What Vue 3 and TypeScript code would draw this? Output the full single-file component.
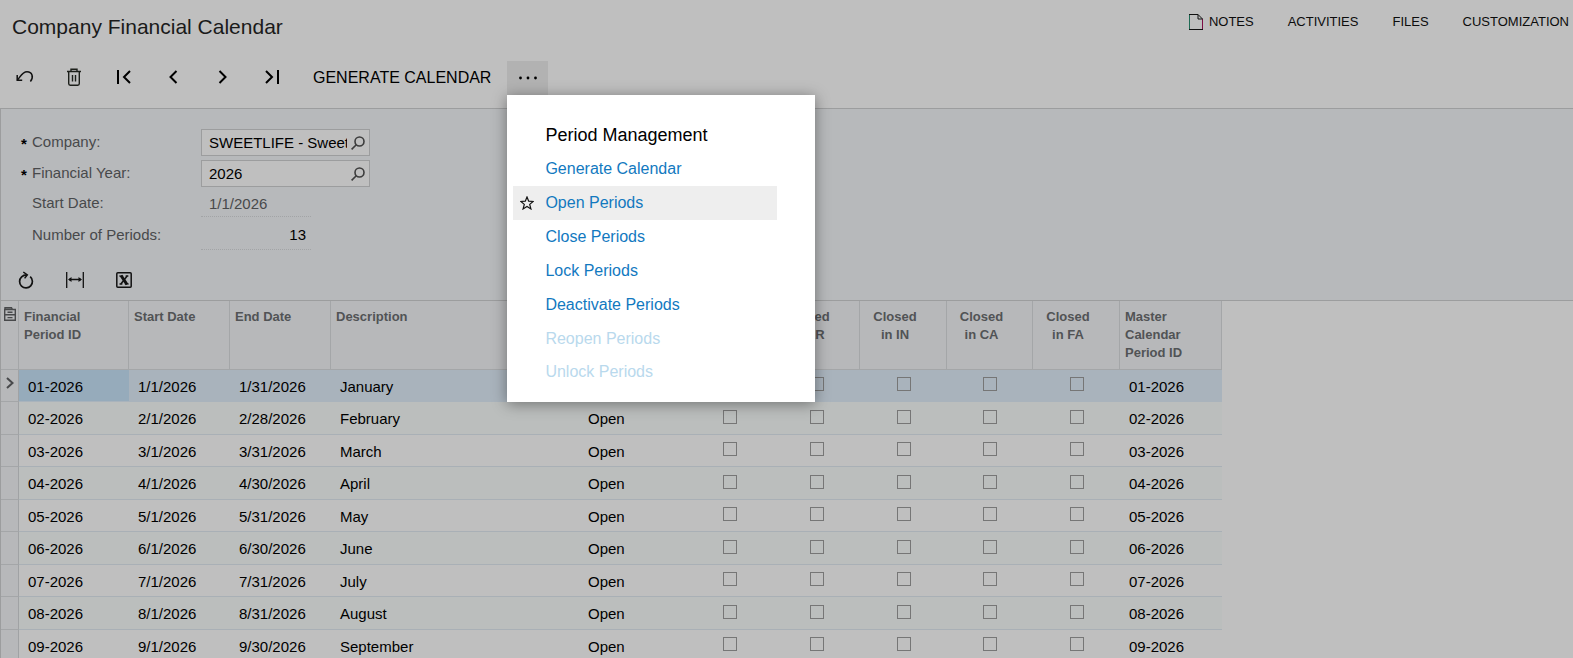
<script setup lang="ts">
import { ref } from 'vue'

interface Period {
  id: string
  start: string
  end: string
  name: string
}

interface Command {
  label: string
  disabled?: boolean
}

const navLinks: string[] = ['ACTIVITIES', 'FILES', 'CUSTOMIZATION']

const company = ref('SWEETLIFE - Sweet')
const year = ref('2026')
const activeCommand = ref('Open Periods')
const selected = ref('01-2026')

const commands: Command[] = [
  { label: 'Generate Calendar' },
  { label: 'Open Periods' },
  { label: 'Close Periods' },
  { label: 'Lock Periods' },
  { label: 'Deactivate Periods' },
  { label: 'Reopen Periods', disabled: true },
  { label: 'Unlock Periods', disabled: true },
]

const closedIn: string[] = ['AP', 'AR', 'IN', 'CA', 'FA']

const periods: Period[] = [
  { id: '01-2026', start: '1/1/2026', end: '1/31/2026', name: 'January' },
  { id: '02-2026', start: '2/1/2026', end: '2/28/2026', name: 'February' },
  { id: '03-2026', start: '3/1/2026', end: '3/31/2026', name: 'March' },
  { id: '04-2026', start: '4/1/2026', end: '4/30/2026', name: 'April' },
  { id: '05-2026', start: '5/1/2026', end: '5/31/2026', name: 'May' },
  { id: '06-2026', start: '6/1/2026', end: '6/30/2026', name: 'June' },
  { id: '07-2026', start: '7/1/2026', end: '7/31/2026', name: 'July' },
  { id: '08-2026', start: '8/1/2026', end: '8/31/2026', name: 'August' },
  { id: '09-2026', start: '9/1/2026', end: '9/30/2026', name: 'September' },
]
</script>

<template>
  <div class="page">
    <header class="top">
      <h1>Company Financial Calendar</h1>
      <nav class="links">
        <a href="#" class="notes">
          <svg width="14" height="16" viewBox="0 0 14 16" fill="none" stroke-width="1">
            <path d="M.5 15V.5" stroke="#1f6b55" />
            <path d="M13.500 5v10" stroke="#7d0f45" />
            <path d="M0 .5h9l4.500 4.500M0 15.500h14M9 .5V5h4.500" stroke="#111" />
          </svg>
          NOTES
        </a>
        <a v-for="link in navLinks" :key="link" href="#">{{ link }}</a>
      </nav>
    </header>

    <div class="toolbar">
      <div class="icons main-icons">
        <button type="button" aria-label="Cancel">
          <svg width="20" height="16" viewBox="0 0 20 16" fill="none" stroke="#111" stroke-width="1.500">
            <path d="M2.300 11.200C5.500 7.500 7.500 2.800 12 2.800c5.200 0 7 5.400 3.400 9.700" />
            <path d="M2.200 6v5.300h5" />
          </svg>
        </button>
        <button type="button" aria-label="Delete">
          <svg width="14" height="18" viewBox="0 0 14 18" fill="none" stroke="#1c1f1a" stroke-width="1.400">
            <path d="M0 3.500h14M4 3.500V1.200h6v2.300M1.700 3.500v12c0 1 .5 1.700 1.500 1.700h7.600c1 0 1.500-.7 1.500-1.700v-12M5.500 7v6.500M8.500 7v6.500" />
          </svg>
        </button>
        <button type="button" aria-label="First">
          <svg width="14" height="14" viewBox="0 0 14 14" fill="none" stroke="#000" stroke-width="2">
            <path d="M1 0v14M13 1L7 7l6 6" />
          </svg>
        </button>
        <button type="button" aria-label="Previous">
          <svg width="9" height="14" viewBox="0 0 9 14" fill="none" stroke="#000" stroke-width="2">
            <path d="M7.500 1l-6 6 6 6" />
          </svg>
        </button>
        <button type="button" aria-label="Next">
          <svg width="9" height="14" viewBox="0 0 9 14" fill="none" stroke="#000" stroke-width="2">
            <path d="M1.500 1l6 6-6 6" />
          </svg>
        </button>
        <button type="button" aria-label="Last">
          <svg width="14" height="14" viewBox="0 0 14 14" fill="none" stroke="#000" stroke-width="2">
            <path d="M13 0v14M1 1l6 6-6 6" />
          </svg>
        </button>
      </div>
      <button type="button" class="generate">GENERATE CALENDAR</button>
      <div class="more">
        <button type="button" class="more-button" aria-label="More commands" aria-expanded="true">
          <svg width="20" height="4" viewBox="0 0 20 4" fill="#000">
            <circle cx="2.500" cy="2" r="1.400" />
            <circle cx="10" cy="2" r="1.400" />
            <circle cx="17.500" cy="2" r="1.400" />
          </svg>
        </button>
        <section class="menu">
          <h2>Period Management</h2>
          <button
            v-for="command in commands"
            :key="command.label"
            type="button"
            class="command"
            :class="{ active: command.label === activeCommand }"
            :disabled="command.disabled"
            @mouseenter="activeCommand = command.label"
          >
            <span class="star">
              <svg v-if="command.label === activeCommand" width="14" height="14" viewBox="0 0 14 14" fill="none" stroke="#111" stroke-width="1.200">
                <path d="M7 1l1.700 4.200 4.500.3-3.500 2.900 1.200 4.500L7 10.400l-3.900 2.500 1.200-4.500L.8 5.500l4.500-.3z" />
              </svg>
            </span>
            {{ command.label }}
          </button>
        </section>
      </div>
    </div>

    <main class="panel">
      <form class="form" @submit.prevent>
        <label for="company" class="required">Company:</label>
        <div class="lookup">
          <input id="company" v-model="company" type="text" />
          <button type="button" aria-label="Find company">
            <svg width="14" height="14" viewBox="0 0 14 14" fill="none" stroke="#3c3c3c" stroke-width="1.600">
              <circle cx="8.500" cy="5.500" r="4.500" />
              <path d="M5.300 8.700L.6 13.400" />
            </svg>
          </button>
        </div>
        <label for="year" class="required">Financial Year:</label>
        <div class="lookup">
          <input id="year" v-model="year" type="text" />
          <button type="button" aria-label="Find year">
            <svg width="14" height="14" viewBox="0 0 14 14" fill="none" stroke="#3c3c3c" stroke-width="1.600">
              <circle cx="8.500" cy="5.500" r="4.500" />
              <path d="M5.300 8.700L.6 13.400" />
            </svg>
          </button>
        </div>
        <label for="start">Start Date:</label>
        <input id="start" class="readonly" type="text" value="1/1/2026" readonly />
        <label for="count">Number of Periods:</label>
        <input id="count" class="readonly count" type="text" value="13" readonly />
      </form>

      <div class="icons grid-icons">
        <button type="button" aria-label="Refresh">
          <svg width="16" height="18" viewBox="0 0 16 18" fill="none" stroke="#111" stroke-width="1.700">
            <path d="M12.200 5.700A6.400 6.400 0 1 1 3.600 5.900C4.900 4.600 6.500 3.900 9 3.900" />
            <path d="M5.300 1l4 2.900-2.700 3.500" stroke-width="1.500" />
          </svg>
        </button>
        <button type="button" aria-label="Fit columns">
          <svg width="18" height="16" viewBox="0 0 18 16" fill="none" stroke="#111" stroke-width="1.300">
            <path d="M.7 0v16M17.300 0v16M3 7.500h12" />
            <path d="M2 7.500l3.500-2.500v5zM16 7.500l-3.500-2.500v5z" fill="#111" stroke="none" />
          </svg>
        </button>
        <button type="button" aria-label="Export to Excel">
          <svg width="16" height="16" viewBox="0 0 16 16" fill="none" stroke="#111">
            <rect x=".8" y=".8" width="14.400" height="14.400" rx="1" stroke-width="1.500" />
            <path d="M5 3.500l6 9" stroke-width="3" />
            <path d="M11.500 3.500l-7 9" stroke-width="1.500" />
            <path d="M3.200 4h4M9.500 4h3M3.300 12h3.200M8.800 12h4" stroke-width="1" />
          </svg>
        </button>
      </div>

      <div class="grid">
        <table>
          <colgroup>
            <col class="c-mark" />
            <col class="c-id" />
            <col class="c-date" />
            <col class="c-date" />
            <col class="c-desc" />
            <col class="c-status" />
            <col v-for="code in closedIn" :key="code" class="c-closed" />
            <col class="c-master" />
          </colgroup>
          <thead>
            <tr>
              <th class="mark" aria-label="Row details">
                <svg width="12" height="14" viewBox="0 0 12 14" fill="none" stroke="#48494b" stroke-width="1.400">
                  <path d="M.7 2.500h10.600v10.800H.7zM.7 7.800h10.600M1 2.500V.7h6.500l1 1.800M3.500 5.200h5M3.500 10.600h5" />
                </svg>
              </th>
              <th>Financial<br />Period ID</th>
              <th>Start Date</th>
              <th>End Date</th>
              <th>Description</th>
              <th aria-label="Status"></th>
              <th v-for="code in closedIn" :key="code" class="closed">Closed<br />in {{ code }}</th>
              <th>Master<br />Calendar<br />Period ID</th>
            </tr>
          </thead>
          <tbody>
            <tr
              v-for="period in periods"
              :key="period.id"
              :class="{ selected: period.id === selected }"
              @click="selected = period.id"
            >
              <td class="mark">
                <svg v-if="period.id === selected" width="8" height="12" viewBox="0 0 8 12" fill="none" stroke="#48494b" stroke-width="2">
                  <path d="M1 1l5.500 5L1 11" />
                </svg>
              </td>
              <td class="id">{{ period.id }}</td>
              <td>{{ period.start }}</td>
              <td>{{ period.end }}</td>
              <td>{{ period.name }}</td>
              <td>Open</td>
              <td v-for="code in closedIn" :key="code" class="check">
                <input type="checkbox" :aria-label="`${period.name} closed in ${code}`" />
              </td>
              <td>{{ period.id }}</td>
            </tr>
          </tbody>
        </table>
      </div>
    </main>
  </div>
</template>

<style>
html,
body {
  margin: 0;
  overflow: hidden;
  background: #bfbfbf;
}
</style>

<style scoped>
* {
  box-sizing: border-box;
}

.page {
  min-height: 100vh;
  background: #bfbfbf;
  color: #000;
  font: 15px/18px "Liberation Sans", Arial, sans-serif;
}

button,
input {
  margin: 0;
  padding: 0;
  border: 0;
  outline: 0;
  border-radius: 0;
  background: none;
  color: inherit;
  font: inherit;
}

svg {
  display: block;
  flex: none;
}

.top {
  display: flex;
  justify-content: space-between;
  height: 61px;
  padding: 0 4px 0 12px;
}

h1 {
  margin: 0;
  padding-top: 14px;
  color: #1a1a1a;
  font-size: 21px;
  font-weight: 400;
  line-height: 26px;
}

.links {
  display: flex;
  gap: 34px;
  padding-top: 12px;
  font-size: 13px;
}

.links a {
  height: 20px;
  color: #0c0c0c;
  line-height: 20px;
  text-decoration: none;
}

.links .notes {
  display: flex;
  align-items: center;
  gap: 6px;
}

.toolbar {
  display: flex;
  height: 47px;
}

.icons {
  display: grid;
}

.icons button {
  display: grid;
  place-items: center;
}

.main-icons {
  grid-template-columns: repeat(6, 1fr);
  width: 297px;
  height: 32px;
}

.generate {
  height: 34px;
  padding: 0 16px;
  font-size: 16px;
}

.more {
  position: relative;
}

.more-button {
  display: grid;
  place-items: center;
  width: 41px;
  height: 34px;
  background: #b2b2b2;
}

.menu {
  position: absolute;
  z-index: 2;
  top: 34px;
  left: 0;
  width: 308px;
  padding: 23px 38px 14px 6px;
  background: #fff;
  box-shadow: 0 2px 14px rgba(0, 0, 0, 0.4);
}

h2 {
  margin: 0;
  padding-left: 32px;
  font-size: 18px;
  font-weight: 400;
  line-height: 34px;
}

.command {
  display: flex;
  align-items: center;
  width: 100%;
  height: 34px;
  color: #1279bf;
  font-size: 16px;
  text-align: left;
}

.command.active {
  background: #eee;
}

.command:disabled {
  height: 33px;
  color: #b9d9ed;
}

.star {
  width: 32px;
  padding-left: 7px;
}

.panel {
  border-top: 1px solid #9c9d9e;
  border-left: 1px solid #9c9d9e;
  background: #b7b9bb;
}

.form {
  display: grid;
  grid-template-columns: 200px 169px;
  grid-template-rows: 27px 27px 26px 29px;
  gap: 4px 0;
  padding-top: 20px;
}

.form label {
  align-self: center;
  padding: 0 0 2px 31px;
  color: #48494b;
}

.form .required {
  padding-left: 20px;
}

.required::before {
  content: "*";
  display: inline-block;
  width: 11px;
  color: #000;
  font-weight: 700;
  line-height: 14px;
  vertical-align: -2px;
}

.lookup {
  display: flex;
  border: 1px solid #9c9d9e;
  background: #bfbfbf;
}

.lookup input {
  flex: 1;
  min-width: 0;
  padding-left: 7px;
}

.lookup button {
  display: grid;
  place-items: center;
  width: 22px;
}

.readonly {
  width: 110px;
  padding: 0 5px 0 8px;
  border-bottom: 1px dotted #a2a4a6;
  color: #48494b;
}

.count {
  color: #000;
  text-align: right;
}

.grid-icons {
  grid-template-columns: repeat(3, 1fr);
  width: 148px;
  height: 40px;
  margin-top: 10px;
}

.grid {
  border-top: 1px solid #9c9d9e;
  background: #bfbfbf;
}

table {
  width: 1220px;
  border-spacing: 0;
  table-layout: fixed;
}

.c-mark {
  width: 18px;
}

.c-id {
  width: 110px;
}

.c-date {
  width: 101px;
}

.c-desc {
  width: 248px;
}

.c-status {
  width: 107px;
}

.c-closed {
  width: 87px;
}

.c-closed:nth-last-child(3) {
  width: 86px;
}

.c-master {
  width: 102px;
}

th {
  height: 69px;
  padding: 7px 0 0 5px;
  border-right: 1px solid #a4a6a8;
  border-bottom: 1px solid #a4a6a8;
  background: #b7b8ba;
  color: #515355;
  font-size: 13px;
  font-weight: 700;
  text-align: left;
  vertical-align: top;
}

.closed {
  padding: 7px 16px 0 0;
  text-align: center;
}

th.mark {
  padding: 6px 0 0 3px;
}

td {
  height: 32px;
  padding: 2px 0 0 9px;
  border-bottom: 1px solid #a9b0b6;
}

tr:nth-child(even) td {
  height: 33px;
  background: #bbbebd;
}

tr td.mark,
tr:nth-child(even) td.mark {
  padding: 0 0 6px 5px;
  border-right: 1px solid #a0a2a4;
  border-bottom-color: #a4a6a8;
  background: #b7b8ba;
}

.selected td {
  border-bottom-color: #a9b3bc;
  background: #a9b3bc;
}

.selected .id {
  background: #96abbb;
}

.check {
  padding: 0 0 3px;
  text-align: center;
}

.check input {
  display: block;
  width: 14px;
  height: 14px;
  margin: 0 auto;
  border: 1px solid #767676;
  appearance: none;
}
</style>
